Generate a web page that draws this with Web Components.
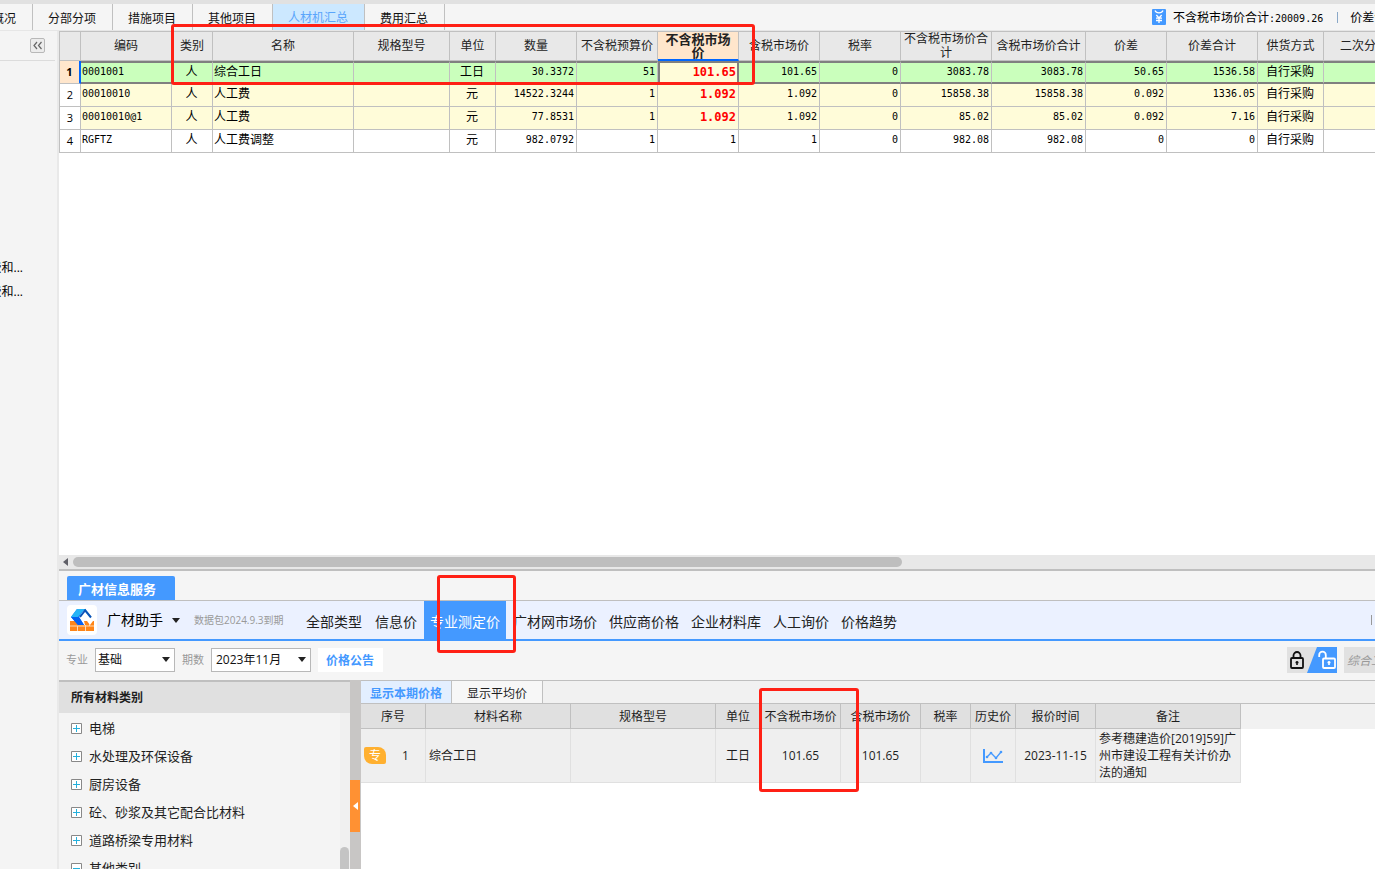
<!DOCTYPE html>
<html lang="zh-CN">
<head>
<meta charset="utf-8">
<title>人材机汇总</title>
<style>
html, body { margin: 0; height: 100%; }
body {
  --ui: "Open Sans", "Noto Sans CJK SC", sans-serif;
  --mono: "DejaVu Sans Mono", "Noto Sans CJK SC", monospace;
  --blue: #4499ff;
  font: 12px/16px var(--ui);
  color: #1e1e1e;
  overflow: hidden;
}
</style>
</head>
<body>
<app-shell>
  <top-tabs slot="top"></top-tabs>
  <side-rail slot="side"></side-rail>
  <material-grid slot="grid"></material-grid>
  <info-panel slot="dock"></info-panel>
</app-shell>

<script>
const define = (name, html, setup) => {
  const template = document.createElement('template');
  template.innerHTML = html;
  customElements.define(name, class extends HTMLElement {
    constructor() {
      super();
      this.attachShadow({ mode: 'open' }).append(template.content.cloneNode(true));
      if (setup) setup(this.shadowRoot, this);
    }
  });
};

/* Red marker rectangle laid over the content it points at */
define('call-out', `
<style>
:host { position: absolute; box-sizing: border-box; border: 3px solid #ff2015; border-radius: 3px;
  pointer-events: none; z-index: 5; }
</style>`);

define('app-shell', `
<style>
:host { display: flex; flex-direction: column; height: 100vh; background: #f4f4f4; }
.body { flex: 1; min-height: 0; display: flex; }
.main { flex: 1; min-width: 0; display: flex; flex-direction: column; position: relative; }
call-out { left: 112px; top: -7px; width: 584px; height: 61px; }
</style>
<slot name="top"></slot>
<div class="body">
  <slot name="side"></slot>
  <div class="main">
    <slot name="grid"></slot>
    <slot name="dock"></slot>
    <call-out></call-out>
  </div>
</div>`);

define('top-tabs', `
<style>
:host { display: flex; height: 27px; border-top: 4px solid #e1e1e1; background: #f5f5f5; box-shadow: inset 0 -1px #e6e6e6; overflow: hidden; }
nav { display: flex; flex: 1; }
button { all: unset; box-sizing: border-box; padding: 2px 16px 0 15px; border-right: 1px solid #c0c0c0; white-space: nowrap; height: 26px; line-height: 26px; color: #111; }
button.cut { width: 33px; display: flex; justify-content: flex-end; overflow: hidden; }
button.on { background: #cce8ff; color: #5aa5fb; line-height: 24px; }
.sum { display: flex; align-items: center; height: 28px; width: 223px; overflow: hidden; white-space: nowrap; color: #000; }
.sum svg { flex: none; margin: 0 7px 2px 0; }
.sum b { font: 10px/16px var(--mono); }
.sum i { flex: none; width: 1px; height: 11px; margin: 0 12px 2px 14px; background: #8aa8c8; }
</style>
<nav>
  <button class="cut">概况</button><button>分部分项</button><button>措施项目</button><button>其他项目</button><button class="on">人材机汇总</button><button>费用汇总</button>
</nav>
<div class="sum">
  <svg width="14" height="16" viewBox="0 0 14 16"><rect width="14" height="16" rx="1" fill="#4499ff"/><path d="M3 1.500Q4 3.800 7 3.800Q10 3.800 11 1.500M4.300 6L7 9L9.700 6M4 9.200h6M4 11.500h6M7 9v5" fill="none" stroke="#fff" stroke-width="1.300"/></svg>
  <span>不含税市场价合计<b>:20009.26</b></span><i></i><span>价差合计</span>
</div>`);

define('side-rail', `
<style>
:host { display: block; box-sizing: border-box; flex: none; width: 59px; border-right: 2px solid #e9e9e9; background: #f4f4f4; overflow: hidden; }
header { display: flex; justify-content: flex-end; align-items: center; margin-right: 2px; padding-right: 10px; border-bottom: 1px solid #dcdcdc; box-sizing: border-box; height: 30px; }
button { all: unset; display: grid; width: 13px; height: 13px; border: 1px solid #b8b8b8; border-radius: 2px; background: #ececec; }
ul { list-style: none; margin: 195px 0 0; padding: 0; width: 23px; }
li { display: flex; justify-content: flex-end; height: 24px; line-height: 24px; color: #000; overflow: hidden; white-space: nowrap; }
</style>
<header><button aria-label="收起"><svg width="13" height="13"><path d="M6 3L3 6.500L6 10M10.500 3L7.500 6.500L10.500 10" fill="none" stroke="#666" stroke-width="1.200"/></svg></button></header>
<ul><li>费和...</li><li>费和...</li></ul>`);

const gridWidths = [21, 91, 41, 141, 96, 46, 81, 81, 81, 81, 81, 91, 94, 81, 91, 66, 81];
const gridHead = ['', '编码', '类别', '名称', '规格型号', '单位', '数量', '不含税预算价', '不含税市场价', '含税市场价', '税率', '不含税市场价合计', '含税市场价合计', '价差', '价差合计', '供货方式', '二次分析'];
const gridRows = [
  ['1', '0001001', '人', '综合工日', '', '工日', '30.3372', '51', '101.65', '101.65', '0', '3083.78', '3083.78', '50.65', '1536.58', '自行采购', ''],
  ['2', '00010010', '人', '人工费', '', '元', '14522.3244', '1', '1.092', '1.092', '0', '15858.38', '15858.38', '0.092', '1336.05', '自行采购', ''],
  ['3', '00010010@1', '人', '人工费', '', '元', '77.8531', '1', '1.092', '1.092', '0', '85.02', '85.02', '0.092', '7.16', '自行采购', ''],
  ['4', 'RGFTZ', '人', '人工费调整', '', '元', '982.0792', '1', '1', '1', '0', '982.08', '982.08', '0', '0', '自行采购', '']
];
const cellKind = i => i === 0 ? 'no' : i === 1 ? 'code' : [2, 5, 15].includes(i) ? 'mid' : [3, 4, 16].includes(i) ? 'name' : 'num';

define('material-grid', `
<style>
:host { flex: 1; min-height: 0; display: flex; flex-direction: column; background: #fff; border-bottom: 2px solid #bfbfbf; overflow: hidden; }
.view { flex: 1; min-height: 0; overflow: hidden; }
table { table-layout: fixed; border-collapse: separate; border-spacing: 0; width: 1346px; border-left: 1px solid #c0c0c0; }
th, td { box-sizing: border-box; border-right: 1px solid #c0c0c0; border-bottom: 1px solid #c0c0c0; color: #000; white-space: nowrap; overflow: hidden; }
th { height: 30px; padding: 0 3px; border-top: 1px solid #c0c0c0; background: #e8e8e8; font-weight: 400; line-height: 14px; white-space: normal; color: #222; }
th.on { background: #ffe6cc; border-bottom: 2px solid #0066ff; font-size: 13px; font-weight: 700; line-height: 13px; }
td { height: 23px; padding: 0 2px 2px 1px; line-height: 16px; }
.no { text-align: center; padding: 0; font-family: var(--ui); font-size: 11px; }
.code, .num { font: 10px/16px var(--mono); }
.num { text-align: right; }
.mid { text-align: center; padding-left: 0; padding-right: 1px; }
.changed td:not(.no) { background: #fffcd9; }
.changed td:nth-child(9) { font-size: 12px; font-weight: 700; color: #f00; }
.current td:not(.no) { background: #caffbc; border-top: 2px solid #808080; border-bottom: 2px solid #808080; }
.current td.no { background: #ffe6cc; border-right: 2px solid #0066ff; font-weight: 700; }
.current td:nth-child(9) { background: #fffcd9; border-left: 2px solid #808080; border-right: 2px solid #808080; padding-right: 1px; }
.bar { flex: none; display: flex; align-items: center; height: 14px; background: #e8e8e8; }
.bar svg { flex: none; margin: 0 5px 0 4px; }
.bar i { width: 63%; height: 10px; border-radius: 5px; background: #bebebe; }
</style>
<div class="view"><table><colgroup></colgroup><thead><tr></tr></thead><tbody></tbody></table></div>
<div class="bar"><svg width="5" height="8"><path d="M5 0v8L0 4z" fill="#606068"/></svg><i></i></div>`, root => {
  root.querySelector('colgroup').innerHTML = gridWidths.map(w => `<col style="width:${w}px">`).join('');
  root.querySelector('thead tr').innerHTML = gridHead.map((t, i) => `<th${i === 8 ? ' class="on"' : ''}>${t}</th>`).join('');
  root.querySelector('tbody').innerHTML = gridRows.map((row, r) =>
    `<tr class="${r < 3 ? 'changed' : ''} ${r === 0 ? 'current' : ''}">${row.map((t, i) => `<td class="${cellKind(i)}">${t}</td>`).join('')}</tr>`).join('');
});

define('info-panel', `
<style>
:host { flex: none; display: flex; flex-direction: column; position: relative; height: 298px; background: #f5f5f5; }
.title { display: flex; padding: 5px 0 0 8px; }
.title button { all: unset; height: 24px; padding: 0 19px 0 11px; border-radius: 2px 2px 0 0; background: var(--blue); color: #fff; font-size: 13px; font-weight: 700; line-height: 26px; }
.split { flex: 1; min-height: 0; display: flex; }
.mark-nav { left: 378px; top: 4px; width: 79px; height: 78px; }
.mark-price { left: 700px; top: 117px; width: 100px; height: 104px; }
</style>
<div class="title"><button>广材信息服务</button></div>
<price-nav></price-nav>
<filter-bar></filter-bar>
<div class="split"><category-tree></category-tree><pane-splitter></pane-splitter><price-list></price-list></div>
<call-out class="mark-nav"></call-out>
<call-out class="mark-price"></call-out>`);

define('price-nav', `
<style>
:host { flex: none; display: flex; align-items: center; box-sizing: border-box; height: 41px; border-top: 1px solid #bfbfbf; border-bottom: 2px solid var(--blue); background: #ebf1ff; font-size: 14px; line-height: 20px; white-space: nowrap; overflow: hidden; }
.logo { flex: none; margin-left: 8px; border-radius: 4px; background: #fff; }
.who { all: unset; display: flex; align-items: center; margin-left: 10px; color: #000; }
.who svg { margin-left: 9px; }
small { width: 90px; margin: 0 16px 0 14px; font-size: 10px; color: #999; }
nav { display: flex; }
nav button { all: unset; height: 38px; padding: 0 6px; line-height: 42px; color: #222; }
nav button:nth-child(-n+3) { margin-right: 1px; }
nav button.on { background: var(--blue); color: #fff; }
.end { width: 1px; height: 10px; margin: 0 3px 0 auto; background: #999; }
</style>
<svg class="logo" width="30" height="30" viewBox="0 0 30 30">
  <path d="M4 16h4l4 4h6l-1-4h3l3 4 3-4h1v10H3V16z" fill="#ff8518"/><path d="M3 21h24M10.500 21v5M18.500 20v6M22.500 19v2" stroke="#ffd9b0"/>
  <path d="M10 4h9l-3 2-4 6 5 8h-6L4 12z" fill="#0f6cf8"/><path d="M10 4h9l-3 2-5 6H4z" fill="#27b4f6"/><path d="M4 12h8l5 8h-6z" fill="#0560f0"/>
  <path d="M17.500 4.500L24 12.500M18 5.500L13 12" fill="none" stroke="#0753b8" stroke-width="2"/>
</svg>
<button class="who">广材助手<svg width="8" height="5"><path d="M0 0h8L4 5z" fill="#222"/></svg></button>
<small>数据包2024.9.3到期</small>
<nav><button>全部类型</button><button>信息价</button><button class="on">专业测定价</button><button>广材网市场价</button><button>供应商价格</button><button>企业材料库</button><button>人工询价</button><button>价格趋势</button></nav>
<i class="end"></i>`);

define('drop-down', `
<style>
:host { display: flex; align-items: center; }
label { margin-right: 7px; font-size: 11px; color: #999; }
.box { position: relative; display: flex; }
select { appearance: none; box-sizing: border-box; width: var(--w); height: 24px; margin: 0; padding: 0 16px 0 var(--pad); border: 1px solid #b8b8b8; border-radius: 0; background: #fff; font: 12px/20px var(--ui); color: #111; }
svg { position: absolute; right: 5px; top: 9px; pointer-events: none; }
</style>
<label for="s"></label><div class="box"><select id="s"></select><svg width="8" height="5"><path d="M0 0h8L4 5z" fill="#222"/></svg></div>`, (root, host) => {
  root.querySelector('label').textContent = host.getAttribute('label');
  const option = document.createElement('option');
  option.textContent = host.getAttribute('value');
  root.querySelector('select').append(option);
});

define('filter-bar', `
<style>
:host { flex: none; display: flex; align-items: center; box-sizing: border-box; height: 39px; padding: 0 0 1px 7px; overflow: hidden; }
.major { --w: 80px; --pad: 2px; margin-right: 7px; }
.period { --w: 100px; --pad: 4px; margin-right: 7px; }
.notice { height: 24px; padding: 0 9px 0 8px; background: #fff; color: var(--blue); font-weight: 700; line-height: 25px; text-decoration: none; }
.lock { all: unset; display: flex; margin-left: auto; }
input { box-sizing: border-box; width: 31px; height: 26px; margin: 0 0 0 7px; padding: 0 0 0 3px; border: 0; border-radius: 0; background: #e1e1e1; font: italic 12px/20px var(--ui); }
input::placeholder { color: #999; }
</style>
<drop-down class="major" label="专业" value="基础"></drop-down>
<drop-down class="period" label="期数" value="2023年11月"></drop-down>
<a class="notice" href="#">价格公告</a>
<button class="lock" aria-label="锁定">
<svg width="50" height="26" viewBox="0 0 50 26"><path d="M0 0h50v26H0z" fill="#e1e1e1"/><path d="M30 0h20v26H20z" fill="#4499ff"/>
<g fill="none" stroke="#111" stroke-width="1.800"><rect x="4" y="11" width="12" height="10" rx="1"/><path d="M6.500 11V8.500a3.500 3.500 0 0 1 7 0V11"/></g><path d="M10 14v4M8.500 15.500h3" stroke="#111" stroke-width="1.600"/>
<g fill="none" stroke="#fff" stroke-width="1.800"><rect x="36" y="11.500" width="12" height="9.500" rx="1"/><path d="M32.200 10V8a3.300 3.300 0 0 1 6.600 0v3"/></g><path d="M42 14v4M40.500 15.500h3" stroke="#fff" stroke-width="1.600"/></svg>
</button>
<input aria-label="搜索" placeholder="综合工日">`);

define('category-tree', `
<style>
:host { flex: none; box-sizing: border-box; width: 291px; border-top: 2px solid #bfbfbf; display: flex; flex-direction: column; background: #f4f4f4; }
header { flex: none; height: 31px; padding-left: 12px; background: #e0e0e0; font-weight: 700; line-height: 31px; }
.list { flex: 1; min-height: 0; display: flex; }
ul { flex: 1; list-style: none; margin: 0; padding: 1px 0 0 12px; overflow: hidden; font-size: 13px; }
li { display: flex; align-items: center; height: 28px; white-space: nowrap; line-height: 18px; }
svg { margin-right: 7px; }
.track { display: flex; flex-direction: column; justify-content: flex-end; width: 10px; background: #f0f0f0; }
.track i { height: 22px; margin-right: 1px; border-radius: 5px 5px 0 0; background: #c4c4c4; }
</style>
<header>所有材料类别</header>
<div class="list"><ul></ul><div class="track"><i></i></div></div>`, root => {
  root.querySelector('ul').innerHTML = ['电梯', '水处理及环保设备', '厨房设备', '砼、砂浆及其它配合比材料', '道路桥梁专用材料', '其他类别'].map((t, i) =>
    `<li><svg width="11" height="11"><path d="M.5.5h10v10H.5z" fill="#fff" stroke="#888"/><path d="M2 5.500h7${i < 5 ? 'M5.500 2v7' : ''}" stroke="#25b0dc"/></svg>${t}</li>`).join('');
});

define('pane-splitter', `
<style>
:host { flex: none; display: flex; flex-direction: column; width: 11px; padding-top: 100px; box-sizing: border-box; background: #c8c6c5; }
button { all: unset; display: grid; place-items: center; width: 10px; height: 52px; background: #ff9133; }
</style>
<button aria-label="折叠"><svg width="5" height="8"><path d="M5 0v8L0 4z" fill="#fff"/></svg></button>`);

const listWidths = [65, 145, 145, 45, 80, 80, 50, 45, 80, 145];
const listHead = ['序号', '材料名称', '规格型号', '单位', '不含税市场价', '含税市场价', '税率', '历史价', '报价时间', '备注'];

define('price-list', `
<style>
:host { flex: 1; min-width: 0; display: flex; flex-direction: column; border-top: 1px solid #bfbfbf; background: #fff; overflow: hidden; }
nav { flex: none; display: flex; height: 22px; border-bottom: 1px solid #c0c0c0; background: #f1f1f1; }
nav button { all: unset; box-sizing: border-box; width: 91px; border-right: 1px solid #c0c0c0; background: #f7f7f7; text-align: center; line-height: 25px; }
nav button.on { background: #e3efff; color: var(--blue); font-weight: 700; }
.head { background: linear-gradient(#f1f1f1 25px, #fff 25px); }
table { table-layout: fixed; border-collapse: separate; border-spacing: 0; width: 880px; }
th, td { box-sizing: border-box; border-right: 1px solid #e0e0e0; border-bottom: 1px solid #e0e0e0; text-align: center; padding: 0; }
th { height: 25px; padding-top: 1px; border-color: #c0c0c0; background: #e0e0e0; font-weight: 400; line-height: 23px; white-space: nowrap; }
td { height: 54px; background: #efefef; line-height: 17px; }
td.text { text-align: left; padding: 0 3px; }
.seq { display: flex; align-items: center; padding-left: 3px; }
.seq b { width: 22px; height: 17px; border-radius: 2px 8px 2px 8px; background: #ffb030; color: #fff; font-weight: 400; }
.seq span { flex: 1; }
td svg { display: block; margin: 0 auto; }
</style>
<nav><button class="on">显示本期价格</button><button>显示平均价</button></nav>
<div class="head"><table><colgroup></colgroup><thead><tr></tr></thead>
<tbody><tr><td><div class="seq"><b>专</b><span>1</span></div></td><td class="text">综合工日</td><td></td><td>工日</td><td>101.65</td><td>101.65</td><td></td>
<td><svg width="20" height="14" viewBox="0 0 20 14"><path d="M1 0v13h19" fill="none" stroke="#4499ff" stroke-width="2"/><path d="M4 8l4-4 5 5 5-6" fill="none" stroke="#4499ff" stroke-width="1.300"/><g fill="#4499ff"><circle cx="4" cy="8" r="1.300"/><circle cx="8" cy="4" r="1.300"/><circle cx="13" cy="9" r="1.300"/><circle cx="18" cy="3" r="1.300"/></g></svg></td>
<td>2023-11-15</td><td class="text">参考穗建造价[2019]59]广州市建设工程有关计价办法的通知</td></tr></tbody></table></div>`, root => {
  root.querySelector('colgroup').innerHTML = listWidths.map(w => `<col style="width:${w}px">`).join('');
  root.querySelector('thead tr').innerHTML = listHead.map(t => `<th>${t}</th>`).join('');
});
</script>
</body>
</html>
